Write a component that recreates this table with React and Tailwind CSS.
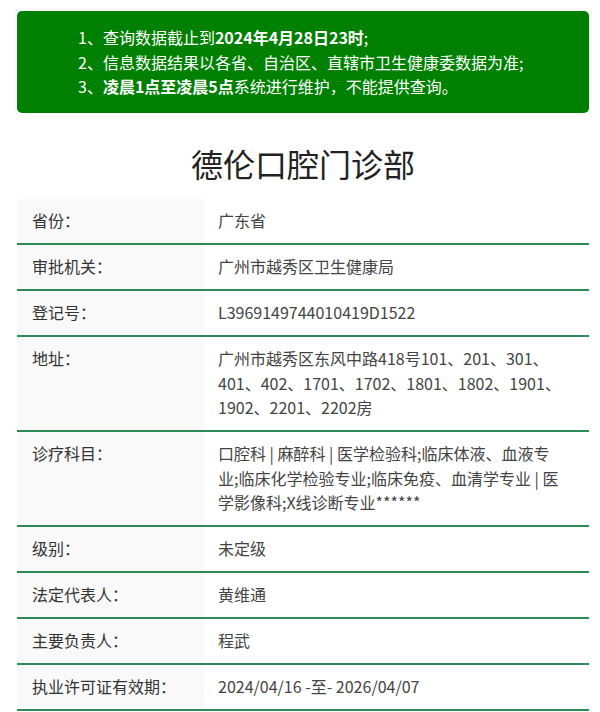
const rows = [
  { label: "省份：", value: ["广东省"] },
  { label: "审批机关：", value: ["广州市越秀区卫生健康局"] },
  { label: "登记号：", value: ["L3969149744010419D1522"] },
  {
    label: "地址：",
    value: ["广州市越秀区东风中路418号101、201、301、", "401、402、1701、1702、1801、1802、1901、", "1902、2201、2202房"],
  },
  {
    label: "诊疗科目：",
    value: [
      "口腔科 | 麻醉科 | 医学检验科;临床体液、血液专",
      "业;临床化学检验专业;临床免疫、血清学专业 | 医",
      "学影像科;X线诊断专业******",
    ],
  },
  { label: "级别：", value: ["未定级"] },
  { label: "法定代表人：", value: ["黄维通"] },
  { label: "主要负责人：", value: ["程武"] },
  { label: "执业许可证有效期：", value: ["2024/04/16 -至- 2026/04/07"] },
];

function Notice() {
  return (
    <div className="mt-[11px] rounded-[5px] bg-[#008000] py-[14px] pl-[61px] pr-4 text-[16px] leading-[24.5px] text-white">
      <p>
        1、查询数据截止到<b>2024年4月28日23时</b>;
      </p>
      <p>2、信息数据结果以各省、自治区、直辖市卫生健康委数据为准;</p>
      <p>
        3、<b>凌晨1点至凌晨5点</b>系统进行维护，不能提供查询。
      </p>
    </div>
  );
}

export default function App() {
  return (
    <div
      className="min-h-[712px] bg-white"
      style={{ fontFamily: '"Noto Sans CJK SC", "Noto Sans", sans-serif' }}
    >
      <div className="ml-[17px] w-[572px]">
        <Notice />
        <h1 className="mt-[26px] mb-[12px] text-center text-[32px] leading-[48px] font-normal text-[#222]">
          德伦口腔门诊部
        </h1>
        <div className="flex flex-col">
          {rows.map((r) => (
            <div key={r.label} className="flex border-b-2 border-[#2f8a57] text-[16px] leading-[24.5px]">
              <div className="w-[187px] shrink-0 bg-[#f9f9f9] px-[15px] py-[9.75px] text-[#333]">
                {r.label}
              </div>
              <div className="flex-1 px-[14px] py-[9.75px] text-[#444]">
                {r.value.map((line) => (
                  <p key={line} className="whitespace-nowrap">
                    {line}
                  </p>
                ))}
              </div>
            </div>
          ))}
        </div>
      </div>
    </div>
  );
}
